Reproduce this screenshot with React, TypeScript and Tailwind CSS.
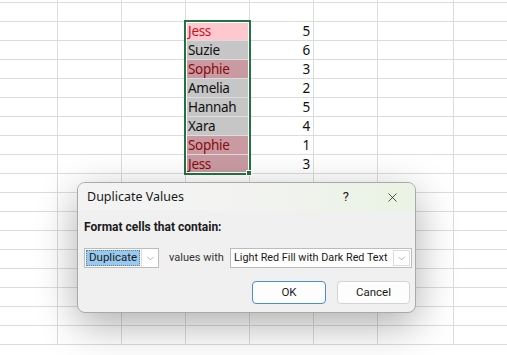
import { X, ChevronDown } from "lucide-react";

const COLS = [58, 64, 64, 64, 64, 64, 76, 60];
const ROWS = 18;

type Cell = { name: string; num: number; kind: "active" | "dup" | "plain" };

const DATA: Cell[] = [
  { name: "Jess", num: 5, kind: "active" },
  { name: "Suzie", num: 6, kind: "plain" },
  { name: "Sophie", num: 3, kind: "dup" },
  { name: "Amelia", num: 2, kind: "plain" },
  { name: "Hannah", num: 5, kind: "plain" },
  { name: "Xara", num: 4, kind: "plain" },
  { name: "Sophie", num: 1, kind: "dup" },
  { name: "Jess", num: 3, kind: "dup" },
];

const fillClass: Record<Cell["kind"], string> = {
  active: "bg-[#ffc7ce] text-[#c8141f]",
  dup: "bg-[#c99aa1] text-[#8a0a10]",
  plain: "bg-[#c6c6c6] text-[#111]",
};

function Sheet() {
  return (
    <div
      className="flex flex-col text-[13.5px] leading-none tracking-[-0.3px]"
      style={{ fontFamily: '"Noto Sans", sans-serif' }}
    >
      <div className="flex h-[3px] border-b border-[#dcdcdc]">
        {COLS.map((w, i) => (
          <div key={i} className="h-full shrink-0 border-r border-[#dcdcdc]" style={{ width: w }} />
        ))}
      </div>
      {Array.from({ length: ROWS }).map((_, r) => {
        const d = r >= 1 && r <= 8 ? DATA[r - 1] : null;
        return (
          <div key={r} className="flex h-[19px] border-b border-[#dcdcdc]">
            {COLS.map((w, c) => {
              let content: React.ReactNode = null;
              let cls = "";
              if (d && c === 3) {
                cls = fillClass[d.kind];
                content = <span className="pl-[2px] pt-[1px]">{d.name}</span>;
              } else if (d && c === 4) {
                cls = "justify-end text-[#111]";
                content = <span className="pr-[3px] pt-[1px]">{d.num}</span>;
              }
              return (
                <div
                  key={c}
                  className={`flex h-full shrink-0 items-center whitespace-nowrap border-r border-[#dcdcdc] ${cls}`}
                  style={{ width: w }}
                >
                  {content}
                </div>
              );
            })}
          </div>
        );
      })}
    </div>
  );
}

function Dialog() {
  return (
    <div
      className="absolute left-[77px] top-[182px] flex h-[131px] w-[339px] flex-col overflow-hidden whitespace-nowrap rounded-[8px] border border-[#a9a9a9] bg-[#f0f0f0] text-[10.8px] text-[#1a1a1a] shadow-[0_12px_40px_rgba(0,0,0,0.32)]"
      style={{ fontFamily: 'Roboto, "Noto Sans", sans-serif' }}
    >
      <div className="flex h-[28px] shrink-0 items-center bg-gradient-to-r from-[#f3f3f3] via-[#f2f3f1] to-[#eaf3e3] pl-[9px]">
        <span className="flex-1 text-[12.5px]" style={{ fontFamily: '"Noto Sans", sans-serif' }}>
          Duplicate Values
        </span>
        <span className="mr-[36px] text-[13px]">?</span>
        <X size={15} strokeWidth={1.2} className="mr-[15px]" />
      </div>
      <div className="flex flex-1 flex-col pl-[6px] pr-[3px]">
        <div className="mt-[7px] text-[12px] font-bold">Format cells that contain:</div>
        <div className="mt-[12px] flex h-[20px] items-center">
          <div className="flex h-full w-[75px] shrink-0 border border-[#bcbcbc] bg-white">
            <div className="m-[1px] flex min-w-0 flex-1 items-center border border-dotted border-[#5a7fa8] bg-[#99c9ef] pl-[2px] text-[11.5px]">
              Duplicate
            </div>
            <div className="flex w-[17px] shrink-0 items-center justify-center border-l border-[#dcdcdc] bg-white">
              <ChevronDown size={11} strokeWidth={1.2} className="text-[#777]" />
            </div>
          </div>
          <span className="ml-[10px] text-[11px] text-[#333]">values with</span>
          <div className="ml-auto flex h-full w-[182px] shrink-0 border border-[#bcbcbc] bg-white">
            <div className="flex min-w-0 flex-1 items-center overflow-hidden pl-[3px]">
              Light Red Fill with Dark Red Text
            </div>
            <div className="m-[1px] flex w-[17px] shrink-0 items-center justify-center border border-[#dcdcdc] bg-white">
              <ChevronDown size={11} strokeWidth={1.2} className="text-[#777]" />
            </div>
          </div>
        </div>
        <div className="mt-[13px] flex justify-end gap-[11px] pr-[2px]">
          <button className="h-[23px] w-[74px] rounded-[4px] border border-[#4c8bd6] bg-[#fdfdfd] text-[11.5px]">OK</button>
          <button className="h-[23px] w-[73px] rounded-[4px] border border-[#d3d3d3] bg-[#fdfdfd] text-[11.5px]">Cancel</button>
        </div>
      </div>
    </div>
  );
}

export default function App() {
  return (
    <div className="relative h-[355px] w-[507px] overflow-hidden bg-white">
      <Sheet />
      <div className="absolute left-[184px] top-[20px] h-[155px] w-[67px] border-2 border-[#217346] outline outline-1 -outline-offset-[3px] outline-white" />
      <div className="absolute left-[246px] top-[170px] h-[6px] w-[6px] border border-white bg-[#217346]" />
      <Dialog />
    </div>
  );
}
